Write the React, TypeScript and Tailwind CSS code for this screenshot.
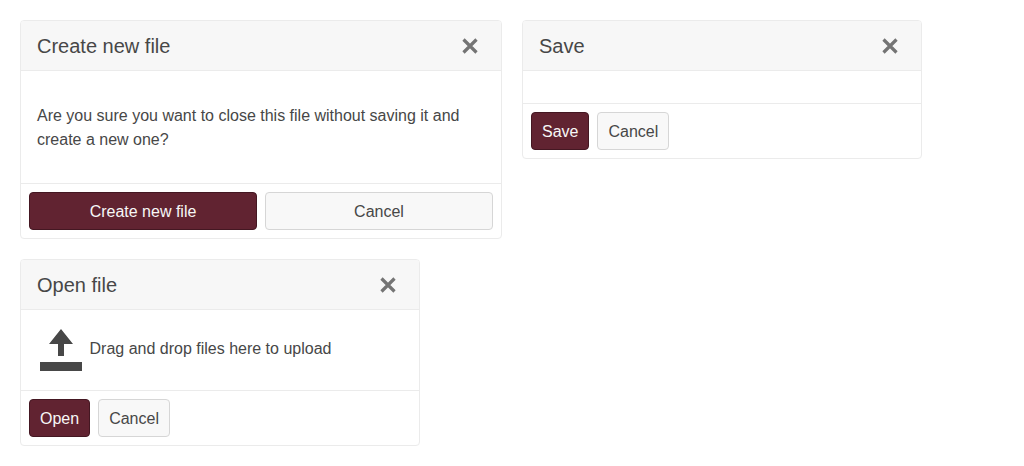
import type { ReactNode } from "react";

function Dialog({ title, width, children, footer }: { title: string; width: string; children?: ReactNode; footer: ReactNode }) {
  return (
    <section className={`flex flex-col overflow-hidden rounded-[4px] border border-[#ebebeb] bg-white ${width}`}>
      <header className="flex h-[50px] items-center justify-between border-b border-[#ebebeb] bg-[#f7f7f7] px-4">
        <h2 className="text-[20px] leading-[30px]">{title}</h2>
        <button type="button" aria-label="Close" className="flex size-[30px] items-center justify-center">
          <svg viewBox="0 0 16 16" className="size-4" fill="none" stroke="#747474" strokeWidth="3.2">
            <path d="M1.5 1.5 14.5 14.5M14.5 1.5 1.5 14.5" />
          </svg>
        </button>
      </header>
      {children}
      <footer className="flex gap-2 border-t border-[#ebebeb] p-2">{footer}</footer>
    </section>
  );
}

function Button({ children, primary, grow }: { children: ReactNode; primary?: boolean; grow?: boolean }) {
  return (
    <button
      type="button"
      className={`h-[38px] rounded-[4px] border px-[10px] pt-0.5 leading-6 ${grow ? "flex-1" : ""} ${
        primary ? "border-[#441722] bg-[#612331] text-[#f7f7f7]" : "border-[#d6d6d6] bg-[#f8f8f8]"
      }`}
    >
      {children}
    </button>
  );
}

export default function App() {
  return (
    <main className="flex flex-wrap items-start gap-5 bg-white p-5 font-['Liberation_Sans',Arial,sans-serif] text-base text-[#474747]">
      <Dialog title="Create new file" width="w-[482px]" footer={<><Button primary grow>Create new file</Button><Button grow>Cancel</Button></>}>
        <p className="px-4 pt-[33px] pb-[31px]">Are you sure you want to close this file without saving it and create a new one?</p>
      </Dialog>
      <Dialog title="Save" width="w-[400px]" footer={<><Button primary>Save</Button><Button>Cancel</Button></>}>
        <div className="h-8" />
      </Dialog>
      <Dialog title="Open file" width="w-[400px]" footer={<><Button primary>Open</Button><Button>Cancel</Button></>}>
        <div className="flex h-20 items-center px-4">
          <svg viewBox="0 0 48 48" className="mr-[4.5px] size-12" fill="#474747">
            <path d="M24 3 36 18H27V30H21V18H12ZM3 36H45V45H3Z" />
          </svg>
          <p className="pb-0.5">Drag and drop files here to upload</p>
        </div>
      </Dialog>
    </main>
  );
}
